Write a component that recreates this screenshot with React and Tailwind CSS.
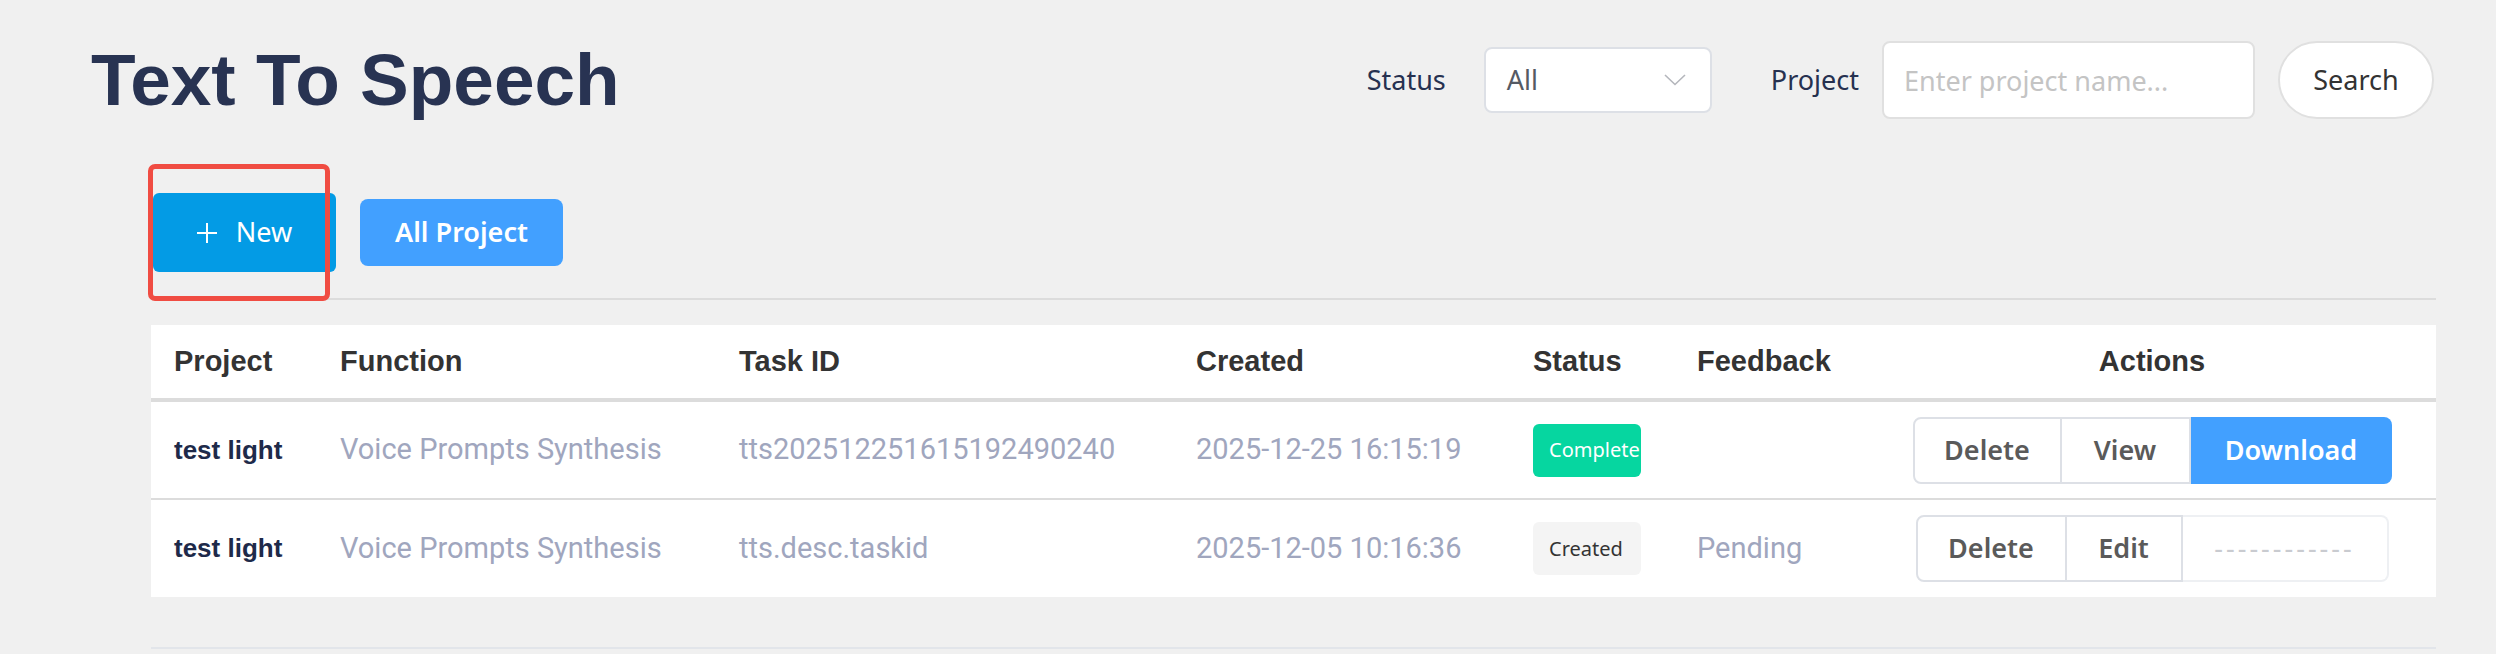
import React from "react";

const NOTO = "[font-family:'Noto_Sans',sans-serif]";

function Chevron() {
  return (
    <svg width="22" height="12" viewBox="0 0 22 12" fill="none">
      <path d="M1 1 L11 10.5 L21 1" stroke="#b4b6bc" strokeWidth="1.6" />
    </svg>
  );
}

function Plus() {
  return (
    <svg width="20" height="20" viewBox="0 0 20 20" fill="none">
      <path d="M10 0 V20 M0 10 H20" stroke="#ffffff" strokeWidth="2" />
    </svg>
  );
}

const cols = "grid grid-cols-[166px_399px_457px_337px_164px_194px_1fr]";

function HeadCell({ children, center }) {
  return (
    <div className={`flex items-center ${center ? "justify-center" : "pl-[23px]"} text-[29px] font-bold text-[#333333] [font-family:'Liberation_Sans',Arial,sans-serif]`}>
      {children}
    </div>
  );
}

function GrayCell({ children }) {
  return (
    <div className="flex items-center pl-[23px] text-[29px] text-[#a0a6be] [font-family:Roboto,sans-serif] whitespace-nowrap">
      {children}
    </div>
  );
}

function ProjCell({ children }) {
  return (
    <div className="flex items-center pl-[23px] text-[26px] font-bold text-[#1e2a4a] [font-family:'Liberation_Sans',Arial,sans-serif] whitespace-nowrap">
      {children}
    </div>
  );
}

export default function App() {
  return (
    <div className={`min-h-[654px] w-full bg-[#f0f0f0] ${NOTO} pb-[4px]`}>
      {/* Header */}
      <div className="flex items-center justify-between pt-[41px] pl-[91px] pr-[62px]">
        <h1 className="text-[73px] leading-[72px] font-bold text-[#283352] [font-family:'Liberation_Sans',Arial,sans-serif]">
          Text To Speech
        </h1>
        <div className="flex items-center h-[78px]">
          <span className="text-[27px] text-[#263150]">Status</span>
          <div className="ml-[38px] w-[228px] h-[66px] bg-white border-2 border-[#dde0e6] rounded-[8px] flex items-center justify-between pl-[21px] pr-[24px]">
            <span className="text-[27px] text-[#555a63]">All</span>
            <Chevron />
          </div>
          <span className="ml-[59px] text-[27px] text-[#263150]">Project</span>
          <input
            className={`ml-[23px] w-[373px] h-[78px] bg-white border-2 border-[#e0e0e0] rounded-[8px] pl-[20px] text-[27px] outline-none placeholder:text-[#c4c4c4] ${NOTO}`}
            placeholder="Enter project name..."
          />
          <button className={`ml-[23px] w-[156px] h-[78px] bg-white border-2 border-[#e0e0e0] rounded-full text-[27px] text-[#333333] ${NOTO}`}>
            Search
          </button>
        </div>
      </div>

      {/* Content */}
      <div className="ml-[151px] mr-[60px]">
        <div className="relative mt-[74px] flex items-center">
          <button className="ml-[2px] w-[183px] h-[79px] rounded-[6px] bg-[#039be5] text-white flex items-center justify-center gap-[19px] text-[27px] font-normal">
            <Plus />
            <span>New</span>
          </button>
          <button className="ml-[24px] w-[203px] h-[67px] rounded-[8px] bg-[#42a0ff] text-white text-[27px] font-semibold">
            All Project
          </button>
          <div className="absolute left-[-3px] top-[-29px] w-[182px] h-[137px] border-[5px] border-[#f04c42] rounded-[7px] pointer-events-none"></div>
        </div>

        <div className="mt-[26px] h-[2px] bg-[#dcdcdc]"></div>

        {/* Table */}
        <div className="mt-[25px] bg-white">
          <div className={`${cols} h-[77px] border-b-4 border-[#dcdcdc]`}>
            <HeadCell>Project</HeadCell>
            <HeadCell>Function</HeadCell>
            <HeadCell>Task ID</HeadCell>
            <HeadCell>Created</HeadCell>
            <HeadCell>Status</HeadCell>
            <HeadCell>Feedback</HeadCell>
            <HeadCell center>Actions</HeadCell>
          </div>

          <div className={`${cols} h-[98px] border-b-2 border-[#dcdcdc]`}>
            <ProjCell>test light</ProjCell>
            <GrayCell>Voice Prompts Synthesis</GrayCell>
            <GrayCell>tts202512251615192490240</GrayCell>
            <GrayCell>2025-12-25 16:15:19</GrayCell>
            <div className="flex items-center pl-[23px]">
              <div className="w-[108px] h-[53px] rounded-[6px] bg-[#06d6a0] overflow-hidden flex items-center pl-[16px] text-[20px] text-white whitespace-nowrap">
                Complete
              </div>
            </div>
            <div></div>
            <div className="flex items-center justify-center">
              <div className="flex h-[67px] text-[27px] font-semibold">
                <div className="w-[149px] border-2 border-[#dde0e6] rounded-l-[8px] flex items-center justify-center text-[#5a5a5a]">Delete</div>
                <div className="w-[129px] border-y-2 border-r-2 border-[#dde0e6] flex items-center justify-center text-[#5a5a5a]">View</div>
                <div className="w-[201px] bg-[#42a0ff] rounded-r-[8px] flex items-center justify-center text-white">Download</div>
              </div>
            </div>
          </div>

          <div className={`${cols} h-[97px]`}>
            <ProjCell>test light</ProjCell>
            <GrayCell>Voice Prompts Synthesis</GrayCell>
            <GrayCell>tts.desc.taskid</GrayCell>
            <GrayCell>2025-12-05 10:16:36</GrayCell>
            <div className="flex items-center pl-[23px]">
              <div className="w-[108px] h-[53px] rounded-[6px] bg-[#f4f4f4] overflow-hidden flex items-center pl-[16px] text-[20px] text-[#333333] whitespace-nowrap">
                Created
              </div>
            </div>
            <GrayCell>Pending</GrayCell>
            <div className="flex items-center justify-center">
              <div className="flex h-[67px] text-[27px] font-semibold">
                <div className="w-[151px] border-2 border-[#dde0e6] rounded-l-[8px] flex items-center justify-center text-[#5a5a5a]">Delete</div>
                <div className="w-[116px] border-y-2 border-r-2 border-[#dde0e6] flex items-center justify-center text-[#5a5a5a]">Edit</div>
                <div className="w-[206px] border-y-2 border-r-2 border-[#eef0f3] rounded-r-[8px] flex items-center justify-center text-[#c9cbd0] font-normal tracking-[3px]">
                  ------------
                </div>
              </div>
            </div>
          </div>
        </div>

        <div className="mt-[50px] h-[2px] bg-[#e2e5ea]"></div>
      </div>
    </div>
  );
}
